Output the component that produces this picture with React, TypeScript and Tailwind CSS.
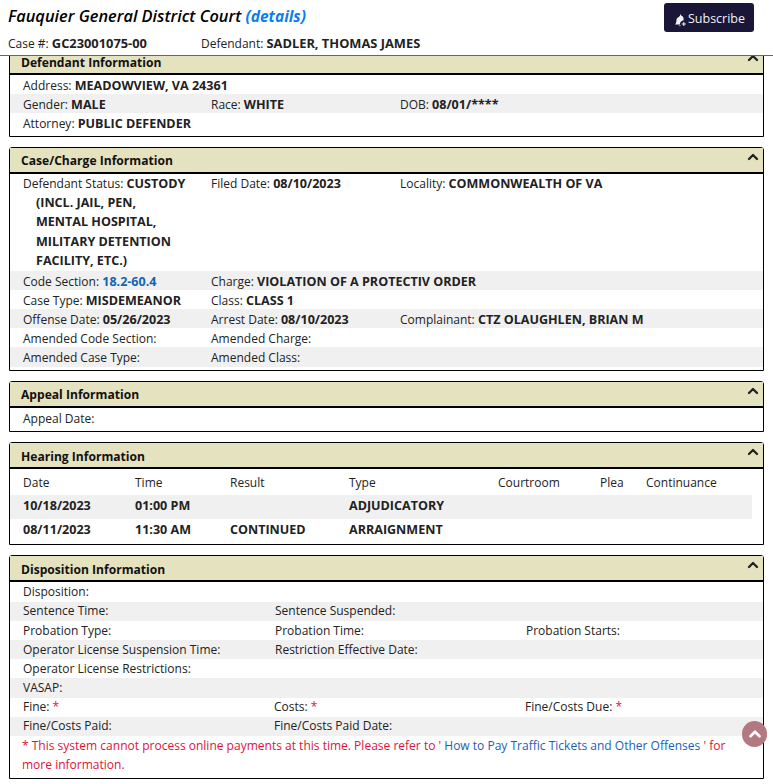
import React from "react";
import { ChevronUp } from "lucide-react";

const B = ({ children, c }: { children: React.ReactNode; c?: string }) => (
  <b className={`text-[12.55px] font-bold ${c ?? ""}`}>{children}</b>
);

const Kv = ({ k, v, c }: { k?: string; v?: React.ReactNode; c?: string }) => (
  <div className={c}>
    {k && <span>{k} </span>}
    {v && <B>{v}</B>}
  </div>
);

const Panel = ({ title, children }: { title: string; children: React.ReactNode }) => (
  <section className="mx-[9px] mb-[10px] rounded-t-[3px] border border-black">
    <div className="flex h-[26px] items-center justify-between border-b-2 border-black bg-[#e5e2c0] pl-[11px] pr-[2px]">
      <h2 className="pt-[4px] text-[12.1px] font-bold text-[#111]">{title}</h2>
      <ChevronUp size={16} strokeWidth={3.5} className="-mt-[6px]" />
    </div>
    {children}
  </section>
);

const Row3 = ({ grey, a, b, d }: { grey?: boolean; a?: React.ReactNode; b?: React.ReactNode; d?: React.ReactNode }) => (
  <div className={`grid h-[19.2px] grid-cols-[188px_189px_1fr] items-center pl-[13px] pt-[2px] ${grey ? "bg-[#f0f0f0]" : ""}`}>
    <div>{a}</div>
    <div>{b}</div>
    <div>{d}</div>
  </div>
);

const Row4 = ({ grey, tight, a, b, d }: { grey?: boolean; tight?: boolean; a?: React.ReactNode; b?: React.ReactNode; d?: React.ReactNode }) => (
  <div className={`grid h-[19.15px] items-center pl-[13px] ${tight ? "grid-cols-[251px_251px_1fr]" : "grid-cols-[252px_251px_1fr]"} ${grey ? "bg-[#f0f0f0]" : ""}`}>
    <div>{a}</div>
    <div>{b}</div>
    <div>{d}</div>
  </div>
);

const Star = () => <span className="text-[#dc143c]">*</span>;

export default function App() {
  return (
    <div className="relative h-[784px] w-[773px] overflow-hidden bg-white text-[12px] text-[#222]" style={{ fontFamily: '"Open Sans", sans-serif' }}>
      <header className="relative z-10 h-[56px] border-b border-[#666] bg-white">
        <div className="flex items-start justify-between pl-[8px] pr-[19px]">
          <h1 className="mt-[4px] text-[16.35px] font-semibold italic text-black">
            Fauquier General District Court <a className="text-[15.5px] font-bold text-[#0d7cf2]">(details)</a>
          </h1>
          <button className="mt-[3px] flex h-[29px] w-[90px] items-center justify-center gap-[1px] rounded-[3px] bg-[#1a1638] pt-[3px] text-[12.5px] text-[#f2f2f2]">
            <svg width="14" height="15" viewBox="0 0 14 15" className="mt-[3px]" fill="#f2f2f2">
              <path d="M7 1.500c.6 0 1 .4 1 .9 1.700.4 2.600 1.800 2.600 3.600v1.500a3.500 3.500 0 0 0-3.600 4H2c1-1 1.400-2.200 1.400-4 0-1.800.9-3.200 2.600-3.600 0-.5.4-.9 1-.9z" />
              <path d="M5.500 12.500h2.600a1.500 1.500 0 0 1-2.600 0z" />
              <path d="M10.300 9h1v1.500h1.500v1h-1.500V13h-1v-1.500H8.800v-1h1.500z" />
            </svg>
            Subscribe
          </button>
        </div>
        <div className="mt-[2px] flex pl-[8px]">
          <div className="w-[193px]">Case #: <B c="!text-[12.85px]">GC23001075-00</B></div>
          <div>Defendant: <B c="!text-[12.85px]">SADLER, THOMAS JAMES</B></div>
        </div>
      </header>

      <main className="-mt-[8px]">
        <Panel title="Defendant Information">
          <Row3 a={<Kv k="Address:" v="MEADOWVIEW, VA 24361" c="whitespace-nowrap" />} />
          <Row3 grey a={<Kv k="Gender:" v="MALE" />} b={<Kv k="Race:" v="WHITE" />} d={<Kv k="DOB:" v="08/01/****" />} />
          <Row3 a={<Kv k="Attorney:" v="PUBLIC DEFENDER" c="whitespace-nowrap" />} />
          <div className="h-[3px]" />
        </Panel>

        <Panel title="Case/Charge Information">
          <div className="grid grid-cols-[188px_189px_1fr] pl-[13px] leading-[19.4px]">
            <div>
              Defendant Status: <B>CUSTODY</B>
              <div className="pl-[13px]"><B>(INCL. JAIL, PEN,<br />MENTAL HOSPITAL,<br />MILITARY DETENTION<br />FACILITY, ETC.)</B></div>
            </div>
            <Kv k="Filed Date:" v="08/10/2023" />
            <Kv k="Locality:" v="COMMONWEALTH OF VA" />
          </div>
          <Row3 grey a={<span>Code Section: <B c="text-[#1565b0]">18.2-60.4</B></span>} b={<Kv k="Charge:" v="VIOLATION OF A PROTECTIV ORDER" c="whitespace-nowrap" />} />
          <Row3 a={<Kv k="Case Type:" v="MISDEMEANOR" />} b={<Kv k="Class:" v="CLASS 1" />} />
          <Row3 grey a={<Kv k="Offense Date:" v="05/26/2023" />} b={<Kv k="Arrest Date:" v="08/10/2023" />} d={<Kv k="Complainant:" v="CTZ OLAUGHLEN, BRIAN M" />} />
          <Row3 a="Amended Code Section:" b="Amended Charge:" />
          <Row3 grey a="Amended Case Type:" b="Amended Class:" />
          <div className="h-[3px]" />
        </Panel>

        <Panel title="Appeal Information">
          <Row3 a="Appeal Date:" />
          <div className="h-[4px]" />
        </Panel>

        <Panel title="Hearing Information">
          <div className="grid grid-cols-[112px_95px_119px_149px_102px_46px_1fr] pl-[13px] pr-[12px] pt-[5px]">
            {["Date", "Time", "Result", "Type", "Courtroom", "Plea", "Continuance"].map((h) => (
              <div key={h} className="h-[19px]">{h}</div>
            ))}
          </div>
          <div className="mr-[11px] mt-[2px] grid h-[24px] grid-cols-[112px_95px_119px_149px_1fr] items-center bg-[#f0f0f0] pl-[13px]">
            <B>10/18/2023</B><B>01:00 PM</B><div></div><B>ADJUDICATORY</B>
          </div>
          <div className="mr-[11px] grid h-[24px] grid-cols-[112px_95px_119px_149px_1fr] items-center pl-[13px]">
            <B>08/11/2023</B><B>11:30 AM</B><B>CONTINUED</B><B>ARRAIGNMENT</B>
          </div>
          <div className="h-[1px]" />
        </Panel>

        <Panel title="Disposition Information">
          <div className="h-[1px]" />
          <Row4 a="Disposition:" />
          <Row4 grey a="Sentence Time:" b="Sentence Suspended:" />
          <Row4 a="Probation Type:" b="Probation Time:" d="Probation Starts:" />
          <Row4 grey a="Operator License Suspension Time:" b="Restriction Effective Date:" />
          <Row4 a="Operator License Restrictions:" />
          <Row4 grey a="VASAP:" />
          <Row4 tight a={<>Fine: <Star /></>} b={<>Costs: <Star /></>} d={<>Fine/Costs Due: <Star /></>} />
          <Row4 tight grey a="Fine/Costs Paid:" b="Fine/Costs Paid Date:" />
          <p className="px-[12px] pb-[4px] text-[12.03px] leading-[19px] text-[#dc143c]">
            * This system cannot process online payments at this time. Please refer to ' <a className="text-[#1a5fb4]">How to Pay Traffic Tickets and Other Offenses</a> ' for more information.
          </p>
        </Panel>
      </main>

      <button className="absolute left-[742px] top-[721px] z-20 flex h-[26px] w-[25px] items-center justify-center rounded-full bg-[#b27a80]">
        <ChevronUp size={18} strokeWidth={3.5} className="text-white" />
      </button>
    </div>
  );
}
